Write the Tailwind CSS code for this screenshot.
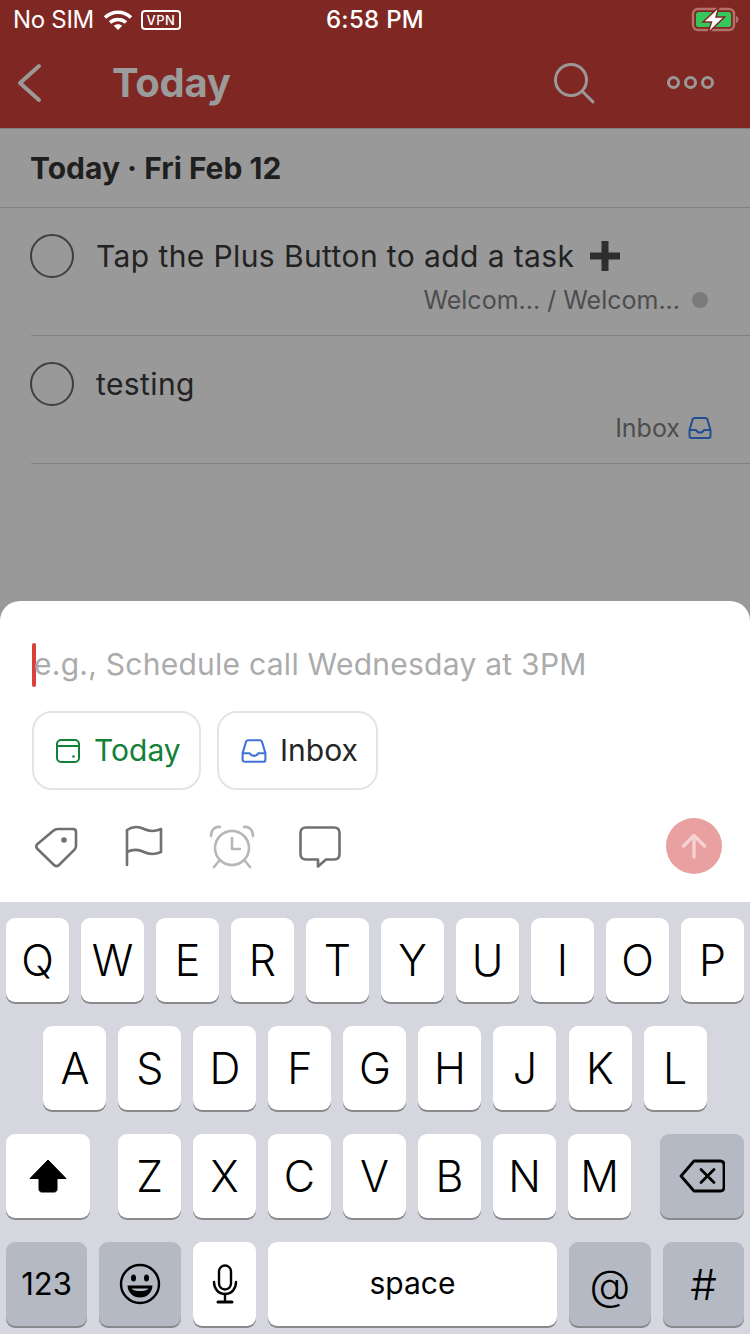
<!DOCTYPE html>
<html><head><meta charset="utf-8"><script src="https://cdn.jsdelivr.net/npm/@tailwindcss/browser@4"></script></head>
<body class="m-0">
<div class="w-[750px] h-[1334px] relative overflow-hidden flex flex-col bg-[#999999] font-['Inter','Liberation_Sans',sans-serif]">
  <!-- red header -->
  <div class="h-[128px] shrink-0 bg-[#7f2823] flex flex-col">
    <div class="h-[40px] relative flex items-center text-white text-[24px]">
      <span class="ml-[13px] font-normal tracking-[-0.3px]">No SIM</span>
      <svg class="ml-[9px]" width="30" height="22" viewBox="0 0 30 22" fill="none" stroke="#fff" stroke-width="3.6"><path d="M2 8.5C9.5 1.5 20.5 1.5 28 8.5"/><path d="M7 13.5C11.5 9.5 18.5 9.5 23 13.5"/><path d="M15 21 10.8 16.8C13 14.8 17 14.8 19.2 16.8Z" fill="#fff" stroke="none"/></svg>
      <span class="ml-[8px] w-[40px] h-[20px] border-2 border-white rounded-[4px] flex items-center justify-center text-[13px] font-medium tracking-[0.5px] leading-none">VPN</span>
      <span class="absolute left-0 right-0 top-[2px] text-center text-[24px] font-medium tracking-[0.3px]">6:58 PM</span>
      <svg class="absolute left-[690px] top-[6px]" width="50" height="28" viewBox="0 0 50 28" fill="none"><rect x="3" y="3" width="41" height="21" rx="5" stroke="#b4706b" stroke-width="2.4"/><rect x="6" y="6" width="35" height="15" rx="2.5" fill="#34c759"/><path d="M46 10v7c1.700-.6 2.500-2 2.500-3.500s-.8-2.900-2.500-3.500Z" fill="#b4706b"/><path d="M29 1 13 16h8.500l-3.500 11 16.500-16H26Z" fill="#fff" stroke="#7f2823" stroke-width="1.500"/></svg>
    </div>
    <div class="h-[88px] relative flex items-center">
      <svg class="ml-[16px] -mt-[2px]" width="26" height="40" viewBox="0 0 26 40" fill="none" stroke="#9c9898" stroke-width="4" stroke-linecap="round" stroke-linejoin="round"><path d="M23 3 4 20l19 17"/></svg>
      <span class="ml-[70px] -mt-[3px] text-[40px] leading-none font-bold text-[#9b9b9b] tracking-[-0.3px]">Today</span>
      <svg class="absolute left-[552px] top-[21px]" width="44" height="44" viewBox="0 0 44 44" fill="none" stroke="#9c9898" stroke-width="3" stroke-linecap="round"><circle cx="19" cy="19" r="15.500"/><path d="M30.500 30.500 41 41"/></svg>
      <div class="absolute left-[667px] top-[36px] flex gap-[4px]">
        <span class="w-[13px] h-[13px] rounded-full border-[3px] border-[#9c9898]"></span>
        <span class="w-[13px] h-[13px] rounded-full border-[3px] border-[#9c9898]"></span>
        <span class="w-[13px] h-[13px] rounded-full border-[3px] border-[#9c9898]"></span>
      </div>
    </div>
  </div>
  <!-- list -->
  <div class="h-[80px] shrink-0 border-t border-b border-[#818181] flex items-center pl-[30px] text-[30px] font-bold text-[#1f1f1f] tracking-[0px] bg-[#999999]">Today · Fri Feb 12</div>
  <div class="ml-[31px] h-[128px] shrink-0 border-b border-[#818181] relative">
    <div class="flex items-center pt-[26px] -ml-[1px]">
      <span class="w-[44px] h-[44px] rounded-full border-2 border-[#3f3f3f]"></span>
      <span class="ml-[22px] text-[30px] leading-[44px] text-[#222222] tracking-[0.4px]">Tap the Plus Button to add a task</span>
      <svg class="ml-[16px]" width="30" height="30" viewBox="0 0 30 30" fill="#2e2e2e"><path d="M11.500 0h7v11.500H30v7H18.500V30h-7V18.500H0v-7h11.500Z"/></svg>
    </div>
    <div class="absolute right-[42px] top-[76px] flex items-center text-[25px] leading-[32px] text-[#4d4d4d]">
      <span>Welcom... / Welcom...</span>
      <span class="ml-[12px] w-[16px] h-[16px] rounded-full bg-[#7b7b7b]"></span>
    </div>
  </div>
  <div class="ml-[31px] h-[128px] shrink-0 border-b border-[#818181] relative">
    <div class="flex items-center pt-[26px] -ml-[1px]">
      <span class="w-[44px] h-[44px] rounded-full border-2 border-[#3f3f3f]"></span>
      <span class="ml-[22px] text-[30px] leading-[44px] text-[#222222] tracking-[0.4px]">testing</span>
    </div>
    <div class="absolute right-[38px] top-[76px] flex items-center text-[25px] leading-[32px] text-[#4d4d4d]">
      <span>Inbox</span>
      <svg class="ml-[8px]" width="24" height="24" viewBox="0 0 24 24" fill="none" stroke="#234d92" stroke-width="2" stroke-linejoin="round" stroke-linecap="round"><path d="M6.500 2h11c1 0 1.500.4 1.800 1.300L22.500 14v6c0 1.400-.8 2-2 2h-17c-1.200 0-2-.6-2-2v-6L4.700 3.300C5 2.400 5.500 2 6.500 2Z"/><path d="M2 14h6c.8 1.800 2 2.500 4 2.500s3.200-.7 4-2.500h6"/></svg>
    </div>
  </div>
  <!-- sheet -->
  <div class="absolute left-0 right-0 top-[601px] h-[301px] bg-white rounded-t-[20px]">
    <div class="flex items-center h-[44px] mt-[42px] ml-[32px]">
      <span class="w-[4px] h-[44px] rounded-full bg-[#d9403a]"></span>
      <span class="text-[30px] text-[#ababab] leading-none -ml-[2px] -mt-[2px] tracking-[0.26px]">e.g., Schedule call Wednesday at 3PM</span>
    </div>
    <div class="flex gap-[16px] ml-[32px] mt-[24px]">
      <div class="w-[169px] h-[79px] rounded-[20px] border-2 border-[#e4e4e4] flex items-center pl-[21px]">
        <svg width="26" height="26" viewBox="0 0 26 26" fill="none" stroke="#118137" stroke-width="2"><rect x="2" y="2" width="22" height="22" rx="4"/><path d="M2 8h22"/><circle cx="18.500" cy="18.500" r="1.300" fill="#118137" stroke="none"/></svg>
        <span class="ml-[13px] -mt-[2px] text-[30px] leading-none text-[#118137]">Today</span>
      </div>
      <div class="w-[161px] h-[79px] rounded-[20px] border-2 border-[#e4e4e4] flex items-center pl-[22px]">
        <svg width="26" height="26" viewBox="0 0 24 24" fill="none" stroke="#3f74d6" stroke-width="1.900" stroke-linejoin="round" stroke-linecap="round"><path d="M6.500 2h11c1 0 1.500.4 1.800 1.300L22.500 14v6c0 1.400-.8 2-2 2h-17c-1.200 0-2-.6-2-2v-6L4.700 3.300C5 2.400 5.500 2 6.500 2Z"/><path d="M2 14h6c.8 1.800 2 2.500 4 2.500s3.200-.7 4-2.500h6"/></svg>
        <span class="ml-[13px] -mt-[2px] text-[30px] leading-none text-[#252525]">Inbox</span>
      </div>
    </div>
    <div class="relative">
      <svg class="absolute left-[34px] top-[35px]" width="44" height="44" viewBox="0 0 44 44" fill="none" stroke="#707070" stroke-width="2.600" stroke-linejoin="round"><path d="M24 4h15c2 0 3 1 3 3v14c0 1.500-.4 2.500-1.500 3.600L25 40c-1.500 1.400-3.500 1.400-5 0L3.500 24c-1.500-1.500-1.500-3.500 0-5L19 6c1.500-1.400 3-2 5-2Z"/><circle cx="30" cy="15" r="2.800" fill="#707070" stroke="none"/></svg>
      <svg class="absolute left-[124px] top-[35px]" width="40" height="42" viewBox="0 0 40 42" fill="none" stroke="#707070" stroke-width="2.600" stroke-linecap="round" stroke-linejoin="round"><path d="M3 40V5c6-4 12-3.500 17-1s10 3 17 0v23c-7 3-12 2.500-17 0s-11-3-17 0"/></svg>
      <svg class="absolute left-[209px] top-[35px]" width="46" height="44" viewBox="0 0 46 44" fill="none" stroke="#b7b7b7" stroke-width="2.600" stroke-linecap="round" stroke-linejoin="round"><circle cx="23" cy="23" r="17"/><path d="M23 13v11h8"/><path d="M2 11C2 5 6 1 11 2"/><path d="M44 11c0-6-4-10-9-9"/><path d="M10 36l-5 6"/><path d="M36 36l5 6"/></svg>
      <svg class="absolute left-[299px] top-[36px]" width="42" height="42" viewBox="0 0 42 42" fill="none" stroke="#707070" stroke-width="2.600" stroke-linejoin="round"><path d="M7 1.500h28c3.500 0 5.500 2 5.500 5.500v21c0 3.500-2 5.500-5.500 5.500h-8l-8 7v-7H7c-3.500 0-5.500-2-5.500-5.500V7c0-3.500 2-5.500 5.500-5.500Z"/></svg>
      <div class="absolute left-[666px] top-[28px] w-[56px] h-[56px] rounded-full bg-[#e8a0a0] flex items-center justify-center">
        <svg width="26" height="26" viewBox="0 0 26 26" fill="none" stroke="#f6d2d2" stroke-width="3.400" stroke-linecap="round" stroke-linejoin="round"><path d="M13 24V3"/><path d="M2.500 13 13 2.500 23.500 13"/></svg>
      </div>
    </div>
  </div>
  <!-- keyboard -->
  <div class="absolute left-0 right-0 top-[902px] bottom-0 bg-[#d5d6de] pt-[16px] px-[6px] flex flex-col gap-[24px] text-black text-[43px] font-light">
    <div class="flex gap-[12px] h-[84px]">
      <div class="w-[63px] bg-white rounded-[9px] shadow-[0_2px_0_#88898d] flex items-center justify-center">Q</div>
      <div class="w-[63px] bg-white rounded-[9px] shadow-[0_2px_0_#88898d] flex items-center justify-center">W</div>
      <div class="w-[63px] bg-white rounded-[9px] shadow-[0_2px_0_#88898d] flex items-center justify-center">E</div>
      <div class="w-[63px] bg-white rounded-[9px] shadow-[0_2px_0_#88898d] flex items-center justify-center">R</div>
      <div class="w-[63px] bg-white rounded-[9px] shadow-[0_2px_0_#88898d] flex items-center justify-center">T</div>
      <div class="w-[63px] bg-white rounded-[9px] shadow-[0_2px_0_#88898d] flex items-center justify-center">Y</div>
      <div class="w-[63px] bg-white rounded-[9px] shadow-[0_2px_0_#88898d] flex items-center justify-center">U</div>
      <div class="w-[63px] bg-white rounded-[9px] shadow-[0_2px_0_#88898d] flex items-center justify-center">I</div>
      <div class="w-[63px] bg-white rounded-[9px] shadow-[0_2px_0_#88898d] flex items-center justify-center">O</div>
      <div class="w-[63px] bg-white rounded-[9px] shadow-[0_2px_0_#88898d] flex items-center justify-center">P</div>
    </div>
    <div class="flex gap-[12.02px] h-[84px] pl-[37.4px]">
      <div class="w-[63px] bg-white rounded-[9px] shadow-[0_2px_0_#88898d] flex items-center justify-center">A</div>
      <div class="w-[63px] bg-white rounded-[9px] shadow-[0_2px_0_#88898d] flex items-center justify-center">S</div>
      <div class="w-[63px] bg-white rounded-[9px] shadow-[0_2px_0_#88898d] flex items-center justify-center">D</div>
      <div class="w-[63px] bg-white rounded-[9px] shadow-[0_2px_0_#88898d] flex items-center justify-center">F</div>
      <div class="w-[63px] bg-white rounded-[9px] shadow-[0_2px_0_#88898d] flex items-center justify-center">G</div>
      <div class="w-[63px] bg-white rounded-[9px] shadow-[0_2px_0_#88898d] flex items-center justify-center">H</div>
      <div class="w-[63px] bg-white rounded-[9px] shadow-[0_2px_0_#88898d] flex items-center justify-center">J</div>
      <div class="w-[63px] bg-white rounded-[9px] shadow-[0_2px_0_#88898d] flex items-center justify-center">K</div>
      <div class="w-[63px] bg-white rounded-[9px] shadow-[0_2px_0_#88898d] flex items-center justify-center">L</div>
    </div>
    <div class="flex gap-[12px] h-[84px]">
      <div class="w-[84px] mr-[16px] bg-white rounded-[9px] shadow-[0_2px_0_#88898d] flex items-center justify-center">
        <svg width="38" height="34" viewBox="0 0 38 34" fill="#000"><path d="M19 1 37 19.500H28V30c0 2-1 3-3 3H13c-2 0-3-1-3-3V19.500H1Z" stroke="#000" stroke-linejoin="round"/></svg>
      </div>
      <div class="w-[63px] bg-white rounded-[9px] shadow-[0_2px_0_#88898d] flex items-center justify-center">Z</div>
      <div class="w-[63px] bg-white rounded-[9px] shadow-[0_2px_0_#88898d] flex items-center justify-center">X</div>
      <div class="w-[63px] bg-white rounded-[9px] shadow-[0_2px_0_#88898d] flex items-center justify-center">C</div>
      <div class="w-[63px] bg-white rounded-[9px] shadow-[0_2px_0_#88898d] flex items-center justify-center">V</div>
      <div class="w-[63px] bg-white rounded-[9px] shadow-[0_2px_0_#88898d] flex items-center justify-center">B</div>
      <div class="w-[63px] bg-white rounded-[9px] shadow-[0_2px_0_#88898d] flex items-center justify-center">N</div>
      <div class="w-[63px] bg-white rounded-[9px] shadow-[0_2px_0_#88898d] flex items-center justify-center">M</div>
      <div class="w-[84px] ml-[17px] bg-[#b5b9c4] rounded-[9px] shadow-[0_2px_0_#88898d] flex items-center justify-center">
        <svg width="46" height="34" viewBox="0 0 46 34" fill="none" stroke="#000" stroke-width="2.800" stroke-linejoin="round" stroke-linecap="round"><path d="M15 2h26c2.500 0 4 1.500 4 4v22c0 2.500-1.500 4-4 4H15L2 17Z"/><path d="M22 10.500 35 23.500M35 10.500 22 23.500"/></svg>
      </div>
    </div>
    <div class="flex gap-[12px] h-[84px]">
      <div class="w-[81px] bg-[#b5b9c4] rounded-[9px] shadow-[0_2px_0_#88898d] flex items-center justify-center text-[31px] font-normal">123</div>
      <div class="w-[82px] bg-[#b5b9c4] rounded-[9px] shadow-[0_2px_0_#88898d] flex items-center justify-center">
        <svg width="42" height="42" viewBox="0 0 42 42" fill="none" stroke="#000" stroke-width="2.400"><circle cx="21" cy="21" r="19"/><ellipse cx="14.500" cy="15" rx="2.500" ry="3.500" fill="#000" stroke="none"/><ellipse cx="27.500" cy="15" rx="2.500" ry="3.500" fill="#000" stroke="none"/><path d="M8.500 22.500h25C33 30 28 34.500 21 34.500S9 30 8.500 22.500Z" fill="#000" stroke="none"/><path d="M12.500 25.500h17C28 27.500 25 28 21 28s-7-.5-8.500-2.500Z" fill="#b5b9c4" stroke="none"/></svg>
      </div>
      <div class="w-[63px] bg-white rounded-[9px] shadow-[0_2px_0_#88898d] flex items-center justify-center">
        <svg width="26" height="40" viewBox="0 0 26 40" fill="none" stroke="#000" stroke-width="2.400" stroke-linecap="round"><rect x="7" y="1.500" width="12" height="24" rx="6"/><path d="M2 18c0 7 4.500 12 11 12s11-5 11-12"/><path d="M13 30v7"/><path d="M6 38h14" stroke-width="3"/></svg>
      </div>
      <div class="w-[289px] bg-white rounded-[9px] shadow-[0_2px_0_#88898d] flex items-center justify-center text-[30px] font-normal pb-[2px]">space</div>
      <div class="w-[82px] bg-[#b5b9c4] rounded-[9px] shadow-[0_2px_0_#88898d] flex items-center justify-center font-light text-[42px]">@</div>
      <div class="w-[81px] bg-[#b5b9c4] rounded-[9px] shadow-[0_2px_0_#88898d] flex items-center justify-center font-light text-[42px]">#</div>
    </div>
  </div>
</div>
</body></html>
